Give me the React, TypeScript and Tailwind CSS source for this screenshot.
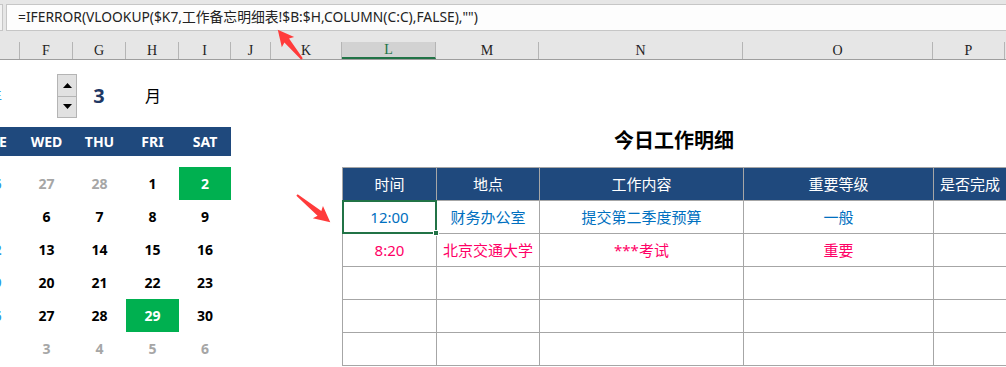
import React from 'react';

const colHeads = [
  { label: '', w: 'w-[20px]' },
  { label: 'F', w: 'w-[53px]' },
  { label: 'G', w: 'w-[53px]' },
  { label: 'H', w: 'w-[53px]' },
  { label: 'I', w: 'w-[52px]' },
  { label: 'J', w: 'w-[40px]' },
  { label: 'K', w: 'w-[71px]' },
  { label: 'L', w: 'w-[94px]', active: true },
  { label: 'M', w: 'w-[103px]' },
  { label: 'N', w: 'w-[204px]' },
  { label: 'O', w: 'w-[190px]' },
  { label: 'P', w: 'w-[72px]' },
];

type Day = { n: number; tone: 'prev' | 'cur' | 'edge' | 'hot' };

const weeks: Day[][] = [
  [{ n: 26, tone: 'edge' }, { n: 27, tone: 'prev' }, { n: 28, tone: 'prev' }, { n: 1, tone: 'cur' }, { n: 2, tone: 'hot' }],
  [{ n: 5, tone: 'edge' }, { n: 6, tone: 'cur' }, { n: 7, tone: 'cur' }, { n: 8, tone: 'cur' }, { n: 9, tone: 'cur' }],
  [{ n: 12, tone: 'edge' }, { n: 13, tone: 'cur' }, { n: 14, tone: 'cur' }, { n: 15, tone: 'cur' }, { n: 16, tone: 'cur' }],
  [{ n: 19, tone: 'edge' }, { n: 20, tone: 'cur' }, { n: 21, tone: 'cur' }, { n: 22, tone: 'cur' }, { n: 23, tone: 'cur' }],
  [{ n: 26, tone: 'edge' }, { n: 27, tone: 'cur' }, { n: 28, tone: 'cur' }, { n: 29, tone: 'hot' }, { n: 30, tone: 'cur' }],
  [{ n: 2, tone: 'prev' }, { n: 3, tone: 'prev' }, { n: 4, tone: 'prev' }, { n: 5, tone: 'prev' }, { n: 6, tone: 'prev' }],
];

const toneClass: Record<Day['tone'], string> = {
  prev: 'text-[#a6a6a6]',
  cur: 'text-black',
  edge: 'text-[#2e9be6]',
  hot: 'bg-[#00b050] text-white',
};

const rows = [
  { time: '12:00', place: '财务办公室', task: '提交第二季度预算', level: '一般', color: 'text-[#0070c0]' },
  { time: '8:20', place: '北京交通大学', task: '***考试', level: '重要', color: 'text-[#ff0066]' },
  { time: '', place: '', task: '', level: '', color: '' },
  { time: '', place: '', task: '', level: '', color: '' },
  { time: '', place: '', task: '', level: '', color: '' },
];

function Arrow({ x, y, len, angle }: { x: number; y: number; len: number; angle: number }) {
  const L = len;
  return (
    <polygon
      points={`0,-1 ${L - 14},-3 ${L - 16},-8 ${L},0 ${L - 16},8 ${L - 14},3 0,1`}
      fill="#ff3b3b"
      transform={`translate(${x} ${y}) rotate(${angle})`}
    />
  );
}

export default function App() {
  return (
    <div className="relative w-[1006px] h-[367px] overflow-hidden bg-white font-['Noto_Sans','Noto_Sans_CJK_SC',sans-serif]">
      {/* Formula bar */}
      <div className="h-[31px] flex bg-[#e6e6e6] pt-[4px]">
        <div className="w-[3px] border-y border-r border-[#c6c6c6] bg-[#f2f2f2]" />
        <div className="flex-1 ml-[3px] flex items-center border-y border-l border-[#c6c6c6] bg-[#fdfdfd] pl-[11px] text-[13.8px] text-[#222] whitespace-nowrap">
          =IFERROR(VLOOKUP($K7,工作备忘明细表!$B:$H,COLUMN(C:C),FALSE),"")
        </div>
      </div>
      <div className="h-[11px] bg-[#e6e6e6]" />

      {/* Column letters */}
      <div className="flex h-[18px] bg-[#e6e6e6] border-b border-[#9e9e9e]">
        {colHeads.map((c, i) => (
          <div
            key={i}
            className={`${c.w} shrink-0 flex items-center justify-center border-r border-[#b5b5b5] font-['Liberation_Serif',serif] text-[14px] leading-none ${
              c.active ? 'bg-[#d2d2d2] text-[#217346] border-b-2 border-b-[#217346]' : 'text-[#222]'
            }`}
          >
            {c.label}
          </div>
        ))}
      </div>

      {/* Sheet body */}
      <div className="flex">
        {/* Calendar */}
        <div className="w-[232px] shrink-0 overflow-hidden">
          <div className="mt-[14px] h-[44px] flex items-center">
            <div className="w-[57px] shrink-0">
              <span className="block -ml-[13px] text-[15px] text-[#2e9be6]">年</span>
            </div>
            <div className="w-[20px] h-[44px] shrink-0 flex flex-col border border-[#b4b4b4] bg-[#e1e1e1]">
              <div className="flex-1 flex items-center justify-center border-b border-[#b4b4b4]">
                <svg width="9" height="5" viewBox="0 0 9 5"><polygon points="0,5 9,5 4.5,0" fill="#000" /></svg>
              </div>
              <div className="flex-1 flex items-center justify-center">
                <svg width="9" height="5" viewBox="0 0 9 5"><polygon points="0,0 9,0 4.5,5" fill="#000" /></svg>
              </div>
            </div>
            <div className="w-[44px] shrink-0 text-center text-[20px] font-bold text-[#1f3864]">3</div>
            <div className="w-[24px] shrink-0" />
            <div className="text-[16px] text-black">月</div>
          </div>

          <div className="mt-[9px] -ml-[33px] w-[264px]">
            <div className="grid grid-cols-[53px_53px_53px_53px_52px] h-[29px] bg-[#1f497d] text-white text-[14px] font-bold">
              {['TUE', 'WED', 'THU', 'FRI', 'SAT'].map((d) => (
                <div key={d} className="flex items-center justify-center">{d}</div>
              ))}
            </div>
            <div className="mt-[11px]">
              {weeks.map((w, i) => (
                <div key={i} className="grid grid-cols-[53px_53px_53px_53px_52px] h-[33px] text-[14px] font-bold">
                  {w.map((d, j) => (
                    <div key={j} className={`flex items-center justify-center ${toneClass[d.tone]}`}>{d.n}</div>
                  ))}
                </div>
              ))}
            </div>
          </div>
        </div>

        <div className="w-[110px] shrink-0" />

        {/* Today's tasks */}
        <div className="w-[664px] shrink-0">
          <div className="mt-[67px] h-[28px] leading-[28px] text-center text-[20px] font-bold text-black">今日工作明细</div>
          <table className="mt-[12px] table-fixed border-collapse w-[664px] text-[15px]">
            <colgroup>
              <col className="w-[94px]" />
              <col className="w-[103px]" />
              <col className="w-[204px]" />
              <col className="w-[190px]" />
              <col className="w-[73px]" />
            </colgroup>
            <thead>
              <tr className="h-[33px] bg-[#1f497d] text-white">
                {['时间', '地点', '工作内容', '重要等级', '是否完成'].map((h) => (
                  <th key={h} className="border border-[#a6a6a6] font-normal p-0 whitespace-nowrap">{h}</th>
                ))}
              </tr>
            </thead>
            <tbody>
              {rows.map((r, i) => (
                <tr key={i} className={`h-[33px] ${r.color}`}>
                  <td className="relative border border-[#a6a6a6] text-center p-0">
                    {r.time}
                    {i === 0 && (
                      <>
                        <div className="absolute -inset-[1px] border-2 border-[#217346]" />
                        <div className="absolute -bottom-[3px] -right-[3px] w-[6px] h-[6px] bg-[#217346] border border-white" />
                      </>
                    )}
                  </td>
                  <td className="border border-[#a6a6a6] text-center p-0">{r.place}</td>
                  <td className="border border-[#a6a6a6] text-center p-0">{r.task}</td>
                  <td className="border border-[#a6a6a6] text-center p-0">{r.level}</td>
                  <td className="border border-[#a6a6a6] text-center p-0" />
                </tr>
              ))}
            </tbody>
          </table>
        </div>
      </div>

      {/* Annotation arrows */}
      <svg className="absolute inset-0 pointer-events-none" width="1006" height="367">
        <Arrow x={302} y={59} len={38} angle={-129.6} />
        <Arrow x={297} y={195} len={43} angle={39.3} />
      </svg>
    </div>
  );
}
